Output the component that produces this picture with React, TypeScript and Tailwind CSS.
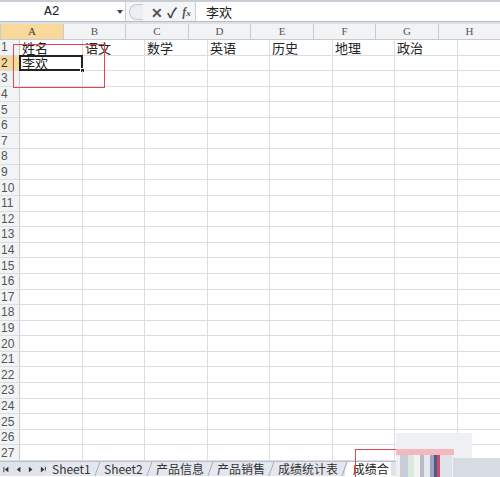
import React from 'react';

const cols = [
  { key: 'A', w: 63 },
  { key: 'B', w: 62 },
  { key: 'C', w: 63 },
  { key: 'D', w: 62 },
  { key: 'E', w: 63 },
  { key: 'F', w: 62 },
  { key: 'G', w: 63 },
  { key: 'H', w: 62 },
];

const data: Record<number, string[]> = {
  1: ['姓名', '语文', '数学', '英语', '历史', '地理', '政治', ''],
  2: ['李欢', '', '', '', '', '', '', ''],
};

const tabs = ['Sheet1', 'Sheet2', '产品信息', '产品销售', '成绩统计表'];

const font = { fontFamily: '"Noto Sans CJK SC", "Liberation Sans", sans-serif' };

const Nav: React.FC<{ dir: 'l' | 'r'; bar?: boolean }> = ({ dir, bar }) => (
  <svg width="7" height="7" viewBox="0 0 7 7" fill="#333">
    {dir === 'l' ? <polygon points="6,0.5 6,6.5 2,3.5" /> : <polygon points="1,0.5 1,6.5 5,3.5" />}
    {bar && (dir === 'l' ? <rect x="0.5" y="0.5" width="1" height="6" /> : <rect x="5.5" y="0.5" width="1" height="6" />)}
  </svg>
);

const App: React.FC = () => {
  const rows = Array.from({ length: 27 }, (_, i) => i + 1);

  return (
    <div className="relative w-[500px] h-[477px] overflow-hidden bg-white text-[#222]" style={font}>
      {/* formula bar */}
      <div className="flex h-[22px] border-t-2 border-[#c9ced6] border-b border-b-[#b7bcc4] bg-white">
        <div className="relative w-[126px] flex items-center border-r border-[#c9ced6]">
          <span className="ml-[44px] text-[13px] leading-none font-['Liberation_Mono'] text-[#222]">A2</span>
          <span className="absolute right-[2px] top-[8px] w-0 h-0 border-l-[3px] border-r-[3px] border-t-[4px] border-l-transparent border-r-transparent border-t-[#444]"></span>
        </div>
        <div className="w-[70px] flex items-center bg-[#f4f5f7] border-r border-[#c9ced6]">
          <span className="ml-[3px] w-[14px] h-[16px] rounded-l-full border border-r-0 border-[#c4c8cf] bg-[#eceef1]"></span>
          <span className="ml-[8px] text-[14px] leading-none font-bold text-[#555]">✕</span>
          <span className="ml-[4px] text-[14px] leading-none font-bold text-[#444]">✓</span>
          <span className="ml-[5px] text-[12px] leading-none italic font-bold text-[#555] font-['Liberation_Serif']">f<span className="text-[9px]">x</span></span>
        </div>
        <div className="flex-1 flex items-center pl-[10px] text-[13px] leading-none">李欢</div>
      </div>
      <div className="h-[2px] bg-[#dde1e7]"></div>

      {/* column headers */}
      <div className="flex h-[16px] bg-[#f2f3f5] border-b border-[#c5cbd3]">
        <div className="relative w-[20px] border-r border-[#c5cbd3]">
          <svg className="absolute right-[2px] bottom-[2px]" width="7" height="7" viewBox="0 0 7 7">
            <polygon points="7,0 7,7 0,7" fill="#cfd3d9" />
          </svg>
        </div>
        {cols.map(c => (
          <div
            key={c.key}
            className={`shrink-0 flex items-center justify-center border-r border-[#c5cbd3] text-[11px] leading-none font-['Liberation_Serif'] ${c.key === 'A' ? 'bg-[#f9d99b] text-[#3a3a3a]' : 'text-[#555]'}`}
            style={{ width: c.w }}
          >
            {c.key}
          </div>
        ))}
      </div>

      {/* grid */}
      <div className="flex flex-col h-[421px]">
        {rows.map(r => (
          <div key={r} className="flex flex-1 border-b border-[#dadde3]">
            <div className={`w-[20px] shrink-0 flex items-center pl-[1px] text-[12px] leading-none border-r border-[#c5cbd3] font-['Liberation_Sans'] ${r === 2 ? 'bg-[#f9d99b] text-[#333]' : 'bg-[#f2f3f5] text-[#555]'}`}>
              {r}
            </div>
            {cols.map((c, ci) => (
              <div
                key={c.key}
                className="relative shrink-0 flex items-center pl-[2px] text-[13px] leading-none border-r border-[#dadde3]"
                style={{ width: c.w }}
              >
                {data[r]?.[ci] ?? ''}
                {r === 2 && c.key === 'A' && (
                  <>
                    <span className="absolute -left-[1px] -top-[1px] -right-[1px] -bottom-[1px] border-2 border-[#222]"></span>
                    <span className="absolute -right-[3px] -bottom-[3px] w-[5px] h-[5px] bg-[#222] border border-white"></span>
                  </>
                )}
              </div>
            ))}
          </div>
        ))}
      </div>

      {/* sheet tabs */}
      <div className="flex items-end h-[15px] bg-[#dfe4eb] border-t border-[#b9c0ca] text-[12px] leading-none">
        <div className="flex items-center gap-[6px] pl-[3px] w-[46px] h-full">
          <Nav dir="l" bar />
          <Nav dir="l" />
          <Nav dir="r" />
          <Nav dir="r" bar />
        </div>
        {tabs.map(t => (
          <div key={t} className="h-full flex items-center px-[6px] border-r border-[#9aa3ae] text-[#333] bg-[#e4e8ee]" style={{ transform: 'skewX(-20deg)' }}>
            <span style={{ transform: 'skewX(20deg)' }}>{t}</span>
          </div>
        ))}
        <div className="h-full flex items-center pl-[8px] pr-[2px] bg-white text-[#222]">成绩合</div>
      </div>

      {/* annotation + artifact */}
      <div className="absolute left-[13px] top-[44px] w-[92px] h-[44px] border border-[#e0474f]"></div>
      <div className="absolute left-[355px] top-[449px] w-[42px] h-[30px] border border-[#e0474f] border-b-0"></div>
      <div className="absolute left-[396px] top-[433px] w-[76px] h-[44px] bg-[#eef0f3]"></div>
      <div className="absolute left-[396px] top-[449px] w-[58px] h-[6px] bg-[#f4b7bd]"></div>
      <div className="absolute left-[400px] top-[455px] w-[52px] h-[22px] flex">
        <span className="w-[8px] bg-[#c9ccd6]"></span>
        <span className="w-[6px] bg-[#d8eadb]"></span>
        <span className="w-[6px] bg-[#f3f3f3]"></span>
        <span className="w-[4px] bg-[#b8bcc8]"></span>
        <span className="w-[6px] bg-[#e8e9ee]"></span>
        <span className="w-[4px] bg-[#9aa3c4]"></span>
        <span className="w-[3px] bg-[#4b5a86]"></span>
        <span className="w-[3px] bg-[#c84b6a]"></span>
        <span className="w-[12px] bg-[#dfe4eb]"></span>
      </div>
      <div className="absolute left-[453px] top-[458px] w-[47px] h-[19px] bg-[#d7dbe2]"></div>
    </div>
  );
};

export default App;
